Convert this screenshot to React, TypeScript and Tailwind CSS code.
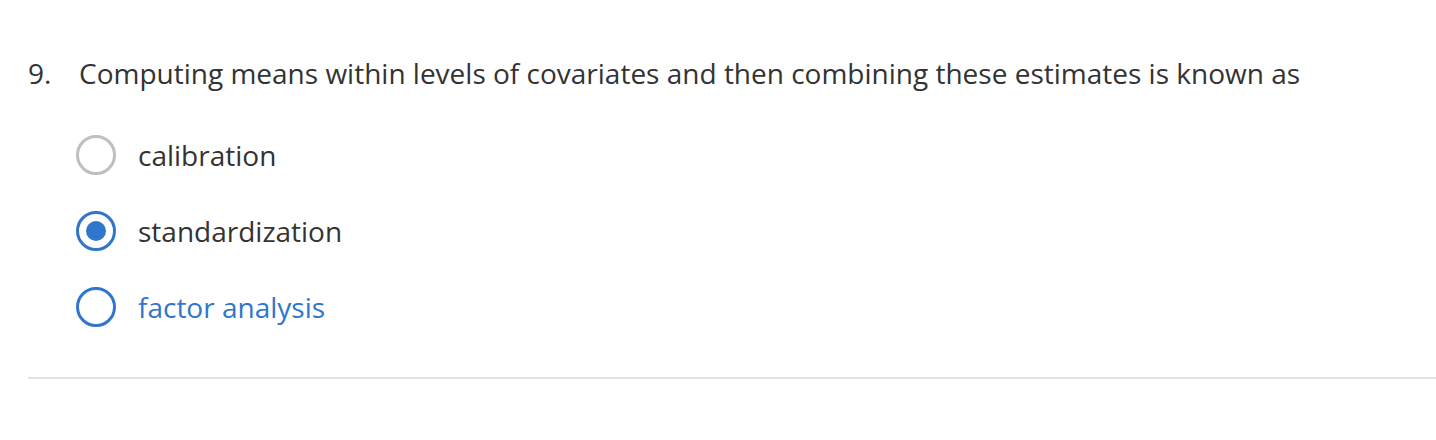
import { useState } from 'react';

const options = ['calibration', 'standardization', 'factor analysis'];

const Radio = ({ checked, hover }: { checked: boolean; hover: boolean }) => (
  <span
    className={`flex h-10 w-10 shrink-0 items-center justify-center rounded-full border-[3px] ${
      checked || hover ? 'border-[#2f76cc]' : 'border-[#bfbfbf]'
    }`}
  >
    {checked && <span className="h-5 w-5 rounded-full bg-[#2f76cc]" />}
  </span>
);

export default function App() {
  const [selected, setSelected] = useState(1);
  const hovered = 2;

  return (
    <div className="h-[440px] w-full bg-white pl-[28px] pt-[52px] font-['Open_Sans',sans-serif] text-[#333333]">
      <div className="flex items-baseline text-[28px] leading-[42px]">
        <span className="w-[51px] shrink-0">9.</span>
        <span>Computing means within levels of covariates and then combining these estimates is known as</span>
      </div>

      <div className="mt-[41px] flex flex-col gap-[36px] pl-[48px]">
        {options.map((opt, i) => (
          <label
            key={opt}
            onClick={() => setSelected(i)}
            className="flex h-10 cursor-pointer items-center gap-[22px] text-[28px]"
          >
            <Radio checked={selected === i} hover={hovered === i} />
            <span className={hovered === i ? 'text-[#2f76cc]' : ''}>{opt}</span>
          </label>
        ))}
      </div>

      <div className="mt-[50px] h-[2px] bg-[#e2e2e2]" />
    </div>
  );
}
